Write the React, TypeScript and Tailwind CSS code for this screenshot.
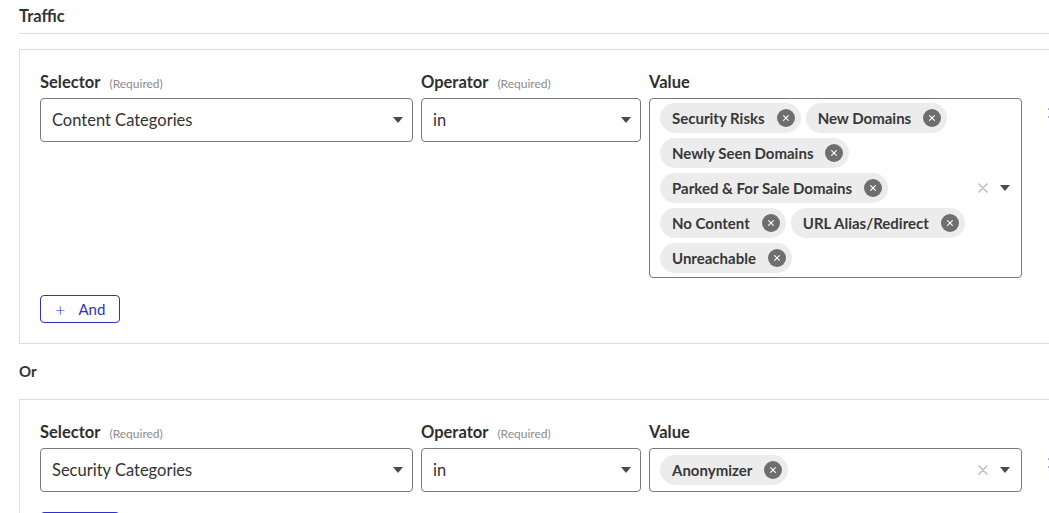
import type { ReactNode } from 'react';

const FONT = { fontFamily: 'Lato, "Noto Sans", sans-serif' };

const Caret = () => (
  <svg width="10" height="6" viewBox="0 0 10 6" className="shrink-0">
    <path d="M0 0h10L5 6z" fill="#4a4a4a" />
  </svg>
);

const Cross = ({ size = 10, color = '#bdbdbd', width = 1.6 }: { size?: number; color?: string; width?: number }) => (
  <svg width={size} height={size} viewBox="0 0 10 10" className="shrink-0">
    <path d="M1 1l8 8M9 1l-8 8" stroke={color} strokeWidth={width} strokeLinecap="round" />
  </svg>
);

function Label({ title, required }: { title: string; required?: boolean }) {
  return (
    <div className="flex items-baseline gap-[9px] h-[20px] mb-[6px]">
      <span className="text-[16.5px] font-bold text-[#2f2f2f] leading-[20px]">{title}</span>
      {required && <span className="text-[12px] text-[#8c8c8c]">(Required)</span>}
    </div>
  );
}

function Select({ value }: { value: string }) {
  return (
    <div className="h-[44px] border border-[#7a7a7a] rounded-[4px] flex items-center justify-between pl-[11px] pr-[9px]">
      <span className="text-[16.5px] text-[#333]">{value}</span>
      <Caret />
    </div>
  );
}

function Chip({ label }: { label: string }) {
  return (
    <div className="h-[30px] rounded-full bg-[#ececec] flex items-center pl-[12px] pr-[6px] gap-[12px]">
      <span className="text-[15px] font-bold text-[#383838] whitespace-nowrap leading-none">{label}</span>
      <span className="w-[18px] h-[18px] rounded-full bg-[#6e6e6e] flex items-center justify-center">
        <Cross size={6} color="#fff" width={1.8} />
      </span>
    </div>
  );
}

function Field({ title, required, children, width }: { title: string; required?: boolean; children: ReactNode; width: string }) {
  return (
    <div className={width}>
      <Label title={title} required={required} />
      {children}
    </div>
  );
}

function Condition({ selector, values, gap }: { selector: string; values: string[]; gap: string }) {
  return (
    <div className="w-[1090px] border border-[#dcdcdc] pl-[20px] pt-[22px] pb-[20px]">
      <div className="flex items-start gap-[8px]">
        <Field title="Selector" required width="w-[373px]">
          <Select value={selector} />
        </Field>
        <Field title="Operator" required width="w-[220px]">
          <Select value="in" />
        </Field>
        <Field title="Value" width="w-[373px]">
          <div className="min-h-[44px] border border-[#7a7a7a] rounded-[4px] flex items-center pl-[10px] pr-[11px] py-[4px]">
            <div className="flex-1 flex flex-wrap gap-[5px]">
              {values.map((v) => <Chip key={v} label={v} />)}
            </div>
            <div className="flex items-center gap-[12px] pl-[6px]">
              <Cross />
              <Caret />
            </div>
          </div>
        </Field>
        <div className="ml-[18px] mt-[36px]">
          <Cross size={10} color="#2f3bd6" width={1.4} />
        </div>
      </div>
      <button className={`${gap} h-[28px] w-[80px] border border-[#2f2fd0] rounded-[4px] flex items-center pl-[14px] gap-[13px] text-[#2f2fd0]`}>
        <span className="text-[18px] font-light leading-none">+</span>
        <span className="text-[15px]">And</span>
      </button>
    </div>
  );
}

export default function App() {
  return (
    <div className="w-[1049px] h-[513px] overflow-hidden bg-white" style={FONT}>
      <div className="pl-[19px] pt-[6px]">
        <div className="text-[16.5px] font-bold text-[#333] leading-[20px] pb-[7px] border-b border-[#dcdcdc] w-[1100px]">Traffic</div>
        <div className="mt-[15px]">
          <Condition
            selector="Content Categories"
            gap="mt-[17px]"
            values={['Security Risks', 'New Domains', 'Newly Seen Domains', 'Parked & For Sale Domains', 'No Content', 'URL Alias/Redirect', 'Unreachable']}
          />
        </div>
        <div className="mt-[17px] text-[15px] font-bold text-[#333] leading-[20px]">Or</div>
        <div className="mt-[18px]">
          <Condition selector="Security Categories" gap="mt-[20px]" values={['Anonymizer']} />
        </div>
      </div>
    </div>
  );
}
